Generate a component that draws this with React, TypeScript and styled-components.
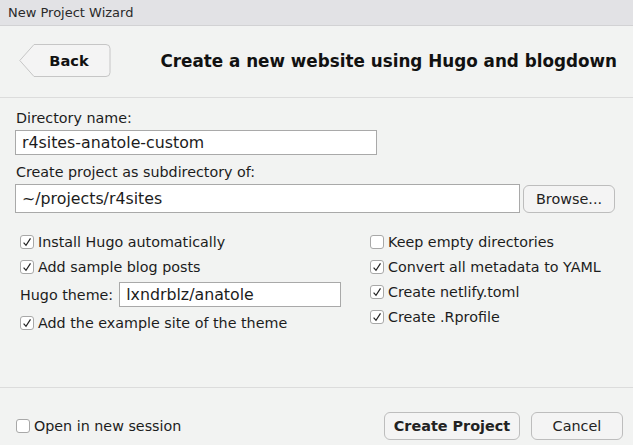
import React from 'react';
import styled, { createGlobalStyle } from 'styled-components';

const GlobalStyle = createGlobalStyle`
  html, body {
    margin: 0;
    padding: 0;
    background: #f2f3f2;
  }
  body {
    font-family: "DejaVu Sans", "Liberation Sans", sans-serif;
    color: #1c1c1c;
  }
`;

const Window = styled.div`
  width: 633px;
  height: 445px;
  display: flex;
  flex-direction: column;
  background: #f2f3f2;
  overflow: hidden;
`;

const TitleBar = styled.div`
  height: 25px;
  flex: none;
  display: flex;
  align-items: center;
  padding-left: 8px;
  font-size: 13px;
  color: #2a2a2a;
  background: #e2e2e5;
  border-bottom: 1px solid #d2d2d4;
`;

const Header = styled.div`
  height: 72px;
  flex: none;
  display: flex;
  align-items: center;
  justify-content: space-between;
  padding: 0 16px 2px 19px;
  box-sizing: border-box;
  border-bottom: 1px solid #dcdcdc;
`;

const BackWrap = styled.button`
  position: relative;
  width: 92px;
  height: 33px;
  padding: 0 0 0 8px;
  border: none;
  background: transparent;
  font-family: inherit;
  font-size: 14.6px;
  font-weight: bold;
  color: #111;
  svg {
    position: absolute;
    left: 0;
    top: 0;
  }
  span {
    position: relative;
  }
`;

const PageTitle = styled.div`
  font-size: 16.8px;
  font-weight: bold;
  color: #111;
`;

const Form = styled.div`
  flex: 1;
  display: flex;
  flex-direction: column;
  padding: 11px 18px 0 15px;
  border-bottom: 1px solid #dcdcdc;
`;

const Label = styled.div<{ $gap?: number }>`
  font-size: 14.3px;
  line-height: 18px;
  padding-left: 1px;
  margin-top: ${p => p.$gap || 0}px;
  margin-bottom: 3px;
`;

const TextBox = styled.div<{ $w?: number; $h?: number }>`
  box-sizing: border-box;
  width: ${p => (p.$w ? `${p.$w}px` : 'auto')};
  height: ${p => p.$h || 25}px;
  display: flex;
  align-items: center;
  padding-left: 6px;
  font-size: 15.8px;
  background: #ffffff;
  border: 1px solid #a9a9a9;
  flex: ${p => (p.$w ? 'none' : '1')};
`;

const PathRow = styled.div`
  display: flex;
  align-items: center;
  gap: 3px;
`;

const PushButton = styled.button<{ $w: number; $bold?: boolean }>`
  box-sizing: border-box;
  width: ${p => p.$w}px;
  height: 28px;
  border: 1px solid #bdbdbd;
  border-radius: 6px;
  background: #f4f4f4;
  font-family: inherit;
  font-size: 14.4px;
  font-weight: ${p => (p.$bold ? 'bold' : 'normal')};
  color: #222;
  padding: 0;
`;

const Options = styled.div`
  display: grid;
  grid-template-columns: 350px 1fr;
  margin-top: 16px;
  padding-left: 5px;
`;

const Column = styled.div`
  display: flex;
  flex-direction: column;
`;

const CheckRow = styled.label<{ $h?: number }>`
  display: flex;
  align-items: center;
  gap: 4px;
  height: ${p => p.$h || 25}px;
  font-size: 14.3px;
`;

const Box = styled.span`
  box-sizing: border-box;
  width: 14px;
  height: 14px;
  flex: none;
  display: flex;
  align-items: center;
  justify-content: center;
  background: #fff;
  border: 1px solid #a8a8a8;
  border-radius: 3px;
`;

const ThemeRow = styled.div`
  display: flex;
  align-items: center;
  gap: 6px;
  height: 31px;
  font-size: 14.3px;
`;

const Footer = styled.div`
  height: 57px;
  flex: none;
  box-sizing: border-box;
  display: flex;
  align-items: center;
  padding: 19px 10px 0 16px;
  gap: 11px;
  > :first-child {
    margin-right: auto;
  }
`;

function Check({ checked, label, h }: { checked?: boolean; label: string; h?: number }) {
  return (
    <CheckRow $h={h}>
      <Box>
        {checked && (
          <svg width="10" height="10" viewBox="0 0 10 10">
            <path d="M1.6 5.6 L4 8.3 L8.5 1.4" fill="none" stroke="#222" strokeWidth="1.2" />
          </svg>
        )}
      </Box>
      {label}
    </CheckRow>
  );
}

export default function App() {
  return (
    <Window>
      <GlobalStyle />
      <TitleBar>New Project Wizard</TitleBar>
      <Header>
        <BackWrap>
          <svg width="92" height="33" viewBox="0 0 92 33">
            <path
              d="M15 0.5 H87 a4 4 0 0 1 4 4 V28.5 a4 4 0 0 1 -4 4 H15 L0.8 16.5 Z"
              fill="#f4f4f4"
              stroke="#c6c6c6"
            />
          </svg>
          <span>Back</span>
        </BackWrap>
        <PageTitle>Create a new website using Hugo and blogdown</PageTitle>
      </Header>
      <Form>
        <Label>Directory name:</Label>
        <TextBox $w={362}>r4sites-anatole-custom</TextBox>
        <Label $gap={8}>Create project as subdirectory of:</Label>
        <PathRow>
          <TextBox $h={29}>~/projects/r4sites</TextBox>
          <PushButton $w={92}>Browse...</PushButton>
        </PathRow>
        <Options>
          <Column>
            <Check checked label="Install Hugo automatically" />
            <Check checked label="Add sample blog posts" />
            <ThemeRow>
              Hugo theme:
              <TextBox $w={222}>lxndrblz/anatole</TextBox>
            </ThemeRow>
            <Check checked label="Add the example site of the theme" />
          </Column>
          <Column>
            <Check label="Keep empty directories" />
            <Check checked label="Convert all metadata to YAML" />
            <Check checked label="Create netlify.toml" />
            <Check checked label="Create .Rprofile" />
          </Column>
        </Options>
      </Form>
      <Footer>
        <Check label="Open in new session" />
        <PushButton $w={136} $bold>Create Project</PushButton>
        <PushButton $w={92}>Cancel</PushButton>
      </Footer>
    </Window>
  );
}
